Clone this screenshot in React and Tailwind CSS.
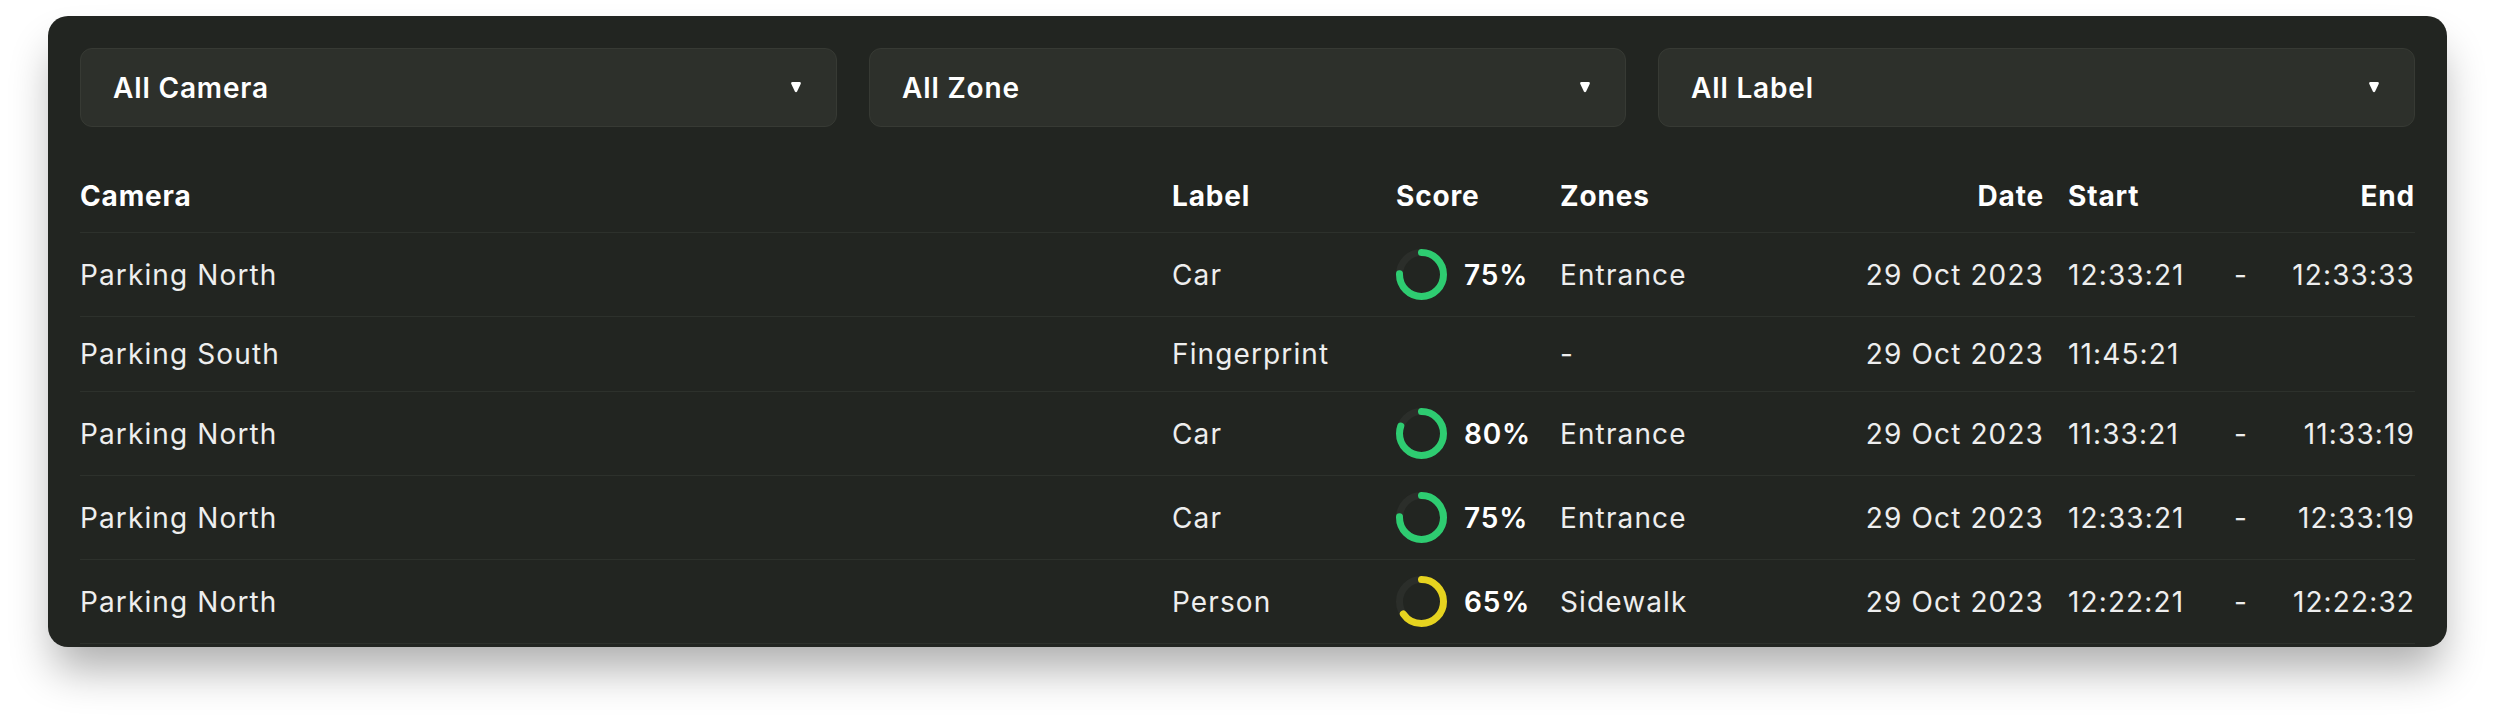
import React from 'react';

const rows = [
  { camera: 'Parking North', label: 'Car', score: 75, zone: 'Entrance', date: '29 Oct 2023', start: '12:33:21', end: '12:33:33' },
  { camera: 'Parking South', label: 'Fingerprint', score: null, zone: '-', date: '29 Oct 2023', start: '11:45:21', end: null },
  { camera: 'Parking North', label: 'Car', score: 80, zone: 'Entrance', date: '29 Oct 2023', start: '11:33:21', end: '11:33:19' },
  { camera: 'Parking North', label: 'Car', score: 75, zone: 'Entrance', date: '29 Oct 2023', start: '12:33:21', end: '12:33:19' },
  { camera: 'Parking North', label: 'Person', score: 65, zone: 'Sidewalk', date: '29 Oct 2023', start: '12:22:21', end: '12:22:32' },
];

const cols = 'grid grid-cols-[1092px_224px_164px_240px_244px_182px_30px_159px] items-center';

// Kleiner gefüllter Pfeil im Dropdown
const Caret = () => (
  <svg width="12" height="11" viewBox="0 0 12 11" className="shrink-0">
    <path d="M1.2 1.8 Q0.6 0 2.4 0 H9.6 Q11.4 0 10.8 1.8 L7.1 9.4 Q6 11 4.9 9.4 Z" fill="#ffffff" />
  </svg>
);

const Dropdown = ({ text }) => (
  <button className="flex-1 h-[79px] flex items-center justify-between pl-8 pr-[34px] rounded-xl bg-[#2d302b] border border-[#373a34] text-white text-[28px] font-semibold tracking-[0.03em]">
    <span>{text}</span>
    <Caret />
  </button>
);

// Ring für den Score
const ScoreRing = ({ value }) => {
  const r = 22;
  const c = 2 * Math.PI * r;
  const color = value >= 70 ? '#2ecc71' : '#e6d31f';
  return (
    <svg width="51" height="51" viewBox="0 0 51 51" className="shrink-0">
      <circle cx="25.5" cy="25.5" r={r} fill="none" stroke="#2b2e2a" strokeWidth="7" />
      <circle cx="25.5" cy="25.5" r={r} fill="none" stroke={color} strokeWidth="7" strokeLinecap="round"
        strokeDasharray={`${(c * value) / 100} ${c}`} transform="rotate(-90 25.5 25.5)" />
    </svg>
  );
};

export default function App() {
  return (
    <div className="min-h-screen bg-white px-12 pt-4 font-['Inter','Liberation_Sans',sans-serif]">
      <div className="w-[2399px] rounded-[20px] bg-[#222521] px-8 pt-8 pb-[3px] shadow-[0_28px_44px_-6px_rgba(0,0,0,0.32)]">
        <div className="flex gap-8">
          <Dropdown text="All Camera" />
          <Dropdown text="All Zone" />
          <Dropdown text="All Label" />
        </div>

        <div className="mt-[33px] text-[28px]">
          <div className={`${cols} py-4 leading-[40px] font-bold tracking-[0.03em] text-white border-b border-[#2d312c]`}>
            <div>Camera</div>
            <div>Label</div>
            <div>Score</div>
            <div>Zones</div>
            <div className="text-right">Date</div>
            <div className="pl-6">Start</div>
            <div></div>
            <div className="text-right">End</div>
          </div>

          {rows.map((r, i) => (
            <div key={i} className={`${cols} py-4 leading-[42px] tracking-[0.04em] text-[#eeeeee] border-b border-[#2d312c]`}>
              <div>{r.camera}</div>
              <div>{r.label}</div>
              <div>
                {r.score !== null && (
                  <div className="flex items-center gap-[17px]">
                    <ScoreRing value={r.score} />
                    <span className="font-semibold tracking-[0.03em] text-white">{r.score}%</span>
                  </div>
                )}
              </div>
              <div>{r.zone}</div>
              <div className="text-right">{r.date}</div>
              <div className="pl-6">{r.start}</div>
              <div className="pl-2">{r.end ? '-' : ''}</div>
              <div className="text-right">{r.end || ''}</div>
            </div>
          ))}
        </div>
      </div>
    </div>
  );
}
